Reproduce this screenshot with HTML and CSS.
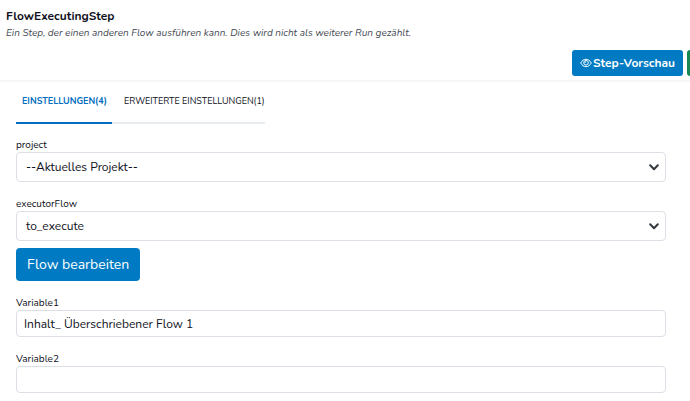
FILE: index.html
```
<!DOCTYPE html>
<html lang="de">
<head>
    <meta charset="UTF-8">
    <meta name="viewport" content="width=device-width, initial-scale=1.0">
    <title>FlowExecutingStep</title>
    <link rel="stylesheet" href="styles.css">
</head>
<body>

<header class="step-header">
    <h1>FlowExecutingStep</h1>
    <p class="description">Ein Step, der einen anderen Flow ausführen kann. Dies wird nicht als weiterer Run gezählt.</p>
    <div class="toolbar">
        <button type="button" class="btn btn-preview">
            <svg class="eye" viewBox="0 0 12 10" aria-hidden="true">
                <path d="M0.7 5C2 2.6 3.8 1.3 6 1.3S10 2.6 11.3 5C10 7.4 8.2 8.7 6 8.7S2 7.4 0.7 5Z"/>
                <circle cx="6" cy="4.8" r="2.3"/>
                <path d="M4.9 4.8A1.1 1.1 0 0 1 6 3.7"/>
            </svg>
            <span>Step-Vorschau</span>
        </button>
        <button type="button" class="btn btn-save" aria-label="Speichern"></button>
    </div>
</header>

<main>
    <!-- Tabs -->
    <div class="tabs" role="tablist">
        <button type="button" class="tab active" role="tab" aria-selected="true">EINSTELLUNGEN(4)</button>
        <button type="button" class="tab" role="tab" aria-selected="false">ERWEITERTE EINSTELLUNGEN(1)</button>
    </div>

    <form class="settings">
        <div class="field">
            <label for="project">project</label>
            <div class="select-wrap">
                <select id="project">
                    <option>--Aktuelles Projekt--</option>
                </select>
                <svg class="chevron" viewBox="0 0 10 7" aria-hidden="true"><path d="M1.2 1.2L5 5.2L8.8 1.2"/></svg>
            </div>
        </div>

        <div class="field">
            <label for="executorFlow">executorFlow</label>
            <div class="select-wrap">
                <select id="executorFlow">
                    <option>to_execute</option>
                </select>
                <svg class="chevron" viewBox="0 0 10 7" aria-hidden="true"><path d="M1.2 1.2L5 5.2L8.8 1.2"/></svg>
            </div>
            <button type="button" class="btn btn-edit">Flow bearbeiten</button>
        </div>

        <div class="field">
            <label for="variable1">Variable1</label>
            <input type="text" id="variable1" value="Inhalt_ Überschriebener Flow 1">
        </div>

        <div class="field">
            <label for="variable2">Variable2</label>
            <input type="text" id="variable2">
        </div>
    </form>
</main>

</body>
</html>
```

FILE: styles.css
```
* {
    box-sizing: border-box;
}
body {
    margin: 0;
    font-family: Nunito, Roboto, "Noto Sans", sans-serif;
    color: #0e1020;
    background-color: #fff;
}
button, input, select {
    font-family: inherit;
    color: inherit;
}
.step-header {
    padding: 8px 6px 4px;
    border-bottom: 2px solid #f5f6f7;
    overflow: hidden;
}
h1 {
    margin: 0;
    font-size: 12px;
    line-height: 16px;
    font-weight: bold;
}
.description {
    margin: 0;
    font-size: 10px;
    line-height: 18px;
    font-style: italic;
    color: #454a54;
}
.toolbar {
    display: flex;
    justify-content: flex-end;
    gap: 4px;
    margin-top: 8px;
    margin-right: -36px;
}
.btn {
    border: none;
    border-radius: 3px;
    color: #fff;
    cursor: pointer;
}
.btn-preview {
    display: flex;
    align-items: center;
    gap: 1px;
    height: 26px;
    padding: 0 8px;
    font-size: 12px;
    font-weight: bold;
    background-color: #007ac3;
}
.eye {
    width: 12px;
    height: 10px;
    fill: none;
    stroke: #fff;
    stroke-width: 1;
}
.btn-save {
    width: 33px;
    height: 26px;
    background-color: #198754;
}
main {
    padding: 0 24px 8px 16px;
}
.tabs {
    display: flex;
}
.tab {
    height: 42px;
    padding: 0 0 2px 12px;
    border: none;
    border-bottom: 2px solid #e9ecef;
    background: none;
    font-size: 9px;
    cursor: pointer;
}
.tab.active {
    padding-left: 6px;
    padding-right: 5px;
    border-bottom-color: #006dbe;
    color: #006dbe;
    font-weight: bold;
}
.settings {
    display: flex;
    flex-direction: column;
    gap: 13px;
    padding-top: 12px;
}
.field label {
    display: block;
    padding-top: 2px;
    font-size: 10px;
    line-height: 14px;
}
.select-wrap {
    position: relative;
}
select, input {
    display: block;
    width: 100%;
    border: 1px solid #dcdfe5;
    border-radius: 4px;
    background-color: #fff;
    font-size: 12px;
}
select {
    appearance: none;
    height: 30px;
    padding: 0 24px 0 9px;
}
input {
    height: 27px;
    padding: 0 7px;
}
.chevron {
    position: absolute;
    top: 12px;
    right: 7px;
    width: 10px;
    height: 7px;
    fill: none;
    stroke: #343a40;
    stroke-width: 2;
    stroke-linecap: round;
    stroke-linejoin: round;
    pointer-events: none;
}
.btn-edit {
    height: 33px;
    margin-top: 7px;
    padding: 0 11px;
    border-radius: 4px;
    font-size: 14px;
    background-color: #007ac3;
}
```
